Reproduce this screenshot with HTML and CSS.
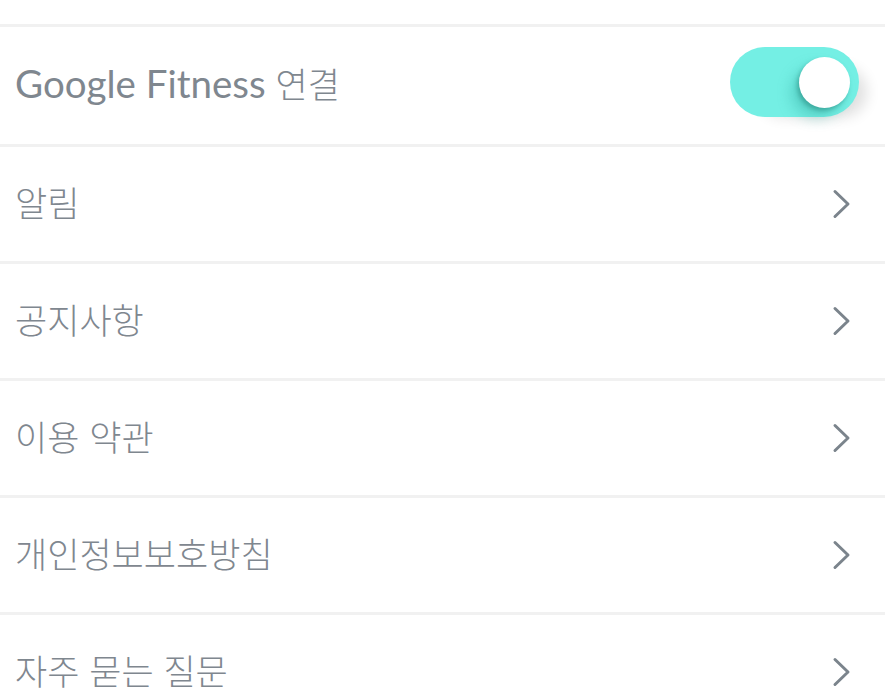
FILE: index.html
```html
<!DOCTYPE html>
<html lang="ko">
<head>
<meta charset="utf-8">
<link rel="stylesheet" href="styles.css">
</head>
<body>
<div class="top"></div>
<ul class="list">
  <li class="row row-toggle">
    <span class="label"><span class="en">Google Fitness</span> 연결</span>
    <span class="toggle"><span class="knob"></span></span>
  </li>
  <li class="row">
    <span class="label">알림</span>
    <svg class="chev" width="20" height="30" viewBox="0 0 20 30"><path d="M3 2.5 L16 15 L3 27.5" fill="none" stroke="#7b848c" stroke-width="3" stroke-linecap="round" stroke-linejoin="round"/></svg>
  </li>
  <li class="row">
    <span class="label">공지사항</span>
    <svg class="chev" width="20" height="30" viewBox="0 0 20 30"><path d="M3 2.5 L16 15 L3 27.5" fill="none" stroke="#7b848c" stroke-width="3" stroke-linecap="round" stroke-linejoin="round"/></svg>
  </li>
  <li class="row">
    <span class="label">이용 약관</span>
    <svg class="chev" width="20" height="30" viewBox="0 0 20 30"><path d="M3 2.5 L16 15 L3 27.5" fill="none" stroke="#7b848c" stroke-width="3" stroke-linecap="round" stroke-linejoin="round"/></svg>
  </li>
  <li class="row">
    <span class="label">개인정보보호방침</span>
    <svg class="chev" width="20" height="30" viewBox="0 0 20 30"><path d="M3 2.5 L16 15 L3 27.5" fill="none" stroke="#7b848c" stroke-width="3" stroke-linecap="round" stroke-linejoin="round"/></svg>
  </li>
  <li class="row">
    <span class="label">자주 묻는 질문</span>
    <svg class="chev" width="20" height="30" viewBox="0 0 20 30"><path d="M3 2.5 L16 15 L3 27.5" fill="none" stroke="#7b848c" stroke-width="3" stroke-linecap="round" stroke-linejoin="round"/></svg>
  </li>
</ul>
</body>
</html>
```
FILE: styles.css
```css
html, body {
  margin: 0;
  padding: 0;
  background: #ffffff;
  overflow: hidden;
}
body {
  width: 885px;
  height: 696px;
  font-family: "Noto Sans CJK KR", "Roboto", sans-serif;
  color: #7f878f;
}
.top {
  height: 24px;
}
.list {
  list-style: none;
  margin: 0;
  padding: 0;
}
.row {
  border-top: 3px solid #f1f1f1;
  height: 114px;
  box-sizing: content-box;
  display: flex;
  align-items: center;
  justify-content: space-between;
  padding: 0 33px 0 15px;
}
.row-toggle {
  height: 117px;
  padding-right: 26px;
}
.label {
  font-size: 35px;
  font-weight: 300;
  line-height: 1;
  white-space: nowrap;
  margin-top: -5px;
}
.en {
  font-family: "Lato", sans-serif;
  font-size: 38.5px;
  font-weight: 400;
}
.chev {
  display: block;
}
.toggle {
  position: relative;
  width: 129px;
  height: 70px;
  border-radius: 35px;
  background: #74efe4;
  margin-top: -7px;
  box-shadow: 18px 10px 14px -10px rgba(0, 0, 0, 0.12);
}
.knob {
  position: absolute;
  right: 9px;
  top: 10px;
  width: 51px;
  height: 51px;
  border-radius: 50%;
  background: #ffffff;
  box-shadow: -2px 3px 4px rgba(40, 140, 130, 0.55), -8px 10px 14px rgba(40, 160, 150, 0.35);
}
```
